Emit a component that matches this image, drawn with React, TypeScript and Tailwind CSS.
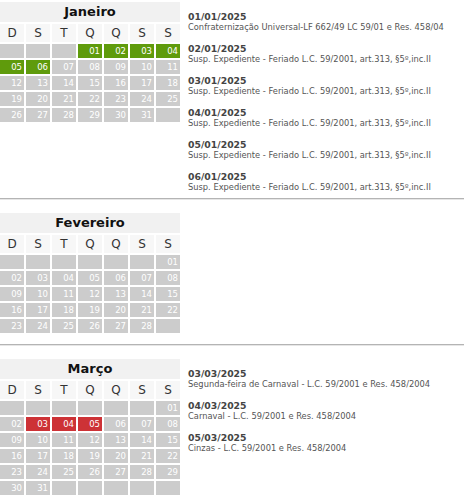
import React from "react";

interface Holiday {
  date: string;
  text: string;
}

interface Month {
  name: string;
  firstWeekday: number;
  days: number;
  marked: number[];
  markColor: string;
  holidays: Holiday[];
}

const SUSP = "Susp. Expediente - Feriado L.C. 59/2001, art.313, §5º,inc.II";

const months: Month[] = [
  {
    name: "Janeiro",
    firstWeekday: 3,
    days: 31,
    marked: [1, 2, 3, 4, 5, 6],
    markColor: "bg-[#5f9b0c]",
    holidays: [
      { date: "01/01/2025", text: "Confraternização Universal-LF 662/49 LC 59/01 e Res. 458/04" },
      { date: "02/01/2025", text: SUSP },
      { date: "03/01/2025", text: SUSP },
      { date: "04/01/2025", text: SUSP },
      { date: "05/01/2025", text: SUSP },
      { date: "06/01/2025", text: SUSP },
    ],
  },
  {
    name: "Fevereiro",
    firstWeekday: 6,
    days: 28,
    marked: [],
    markColor: "",
    holidays: [],
  },
  {
    name: "Março",
    firstWeekday: 6,
    days: 31,
    marked: [3, 4, 5],
    markColor: "bg-[#cd3236]",
    holidays: [
      { date: "03/03/2025", text: "Segunda-feira de Carnaval - L.C. 59/2001 e Res. 458/2004" },
      { date: "04/03/2025", text: "Carnaval - L.C. 59/2001 e Res. 458/2004" },
      { date: "05/03/2025", text: "Cinzas - L.C. 59/2001 e Res. 458/2004" },
    ],
  },
];

const weekdays = ["D", "S", "T", "Q", "Q", "S", "S"];

function Calendar({ month }: { month: Month }) {
  const cells: (number | null)[] = [];
  for (let i = 0; i < month.firstWeekday; i++) cells.push(null);
  for (let d = 1; d <= month.days; d++) cells.push(d);
  while (cells.length % 7 !== 0) cells.push(null);

  return (
    <div className="w-[180px] shrink-0 pt-[2px] pb-[6px]">
      <div className="grid grid-cols-7 gap-[2px]">
        {/* Title */}
        <div className="col-span-7 h-[20px] bg-[#f1f1f1] flex items-center justify-center text-[13px] font-bold text-[#111]">
          {month.name}
        </div>

        {/* Weekday header */}
        {weekdays.map((w, i) => (
          <div
            key={i}
            className="h-[18px] bg-[#f7f7f7] flex items-center justify-center text-[12px] text-[#333]"
          >
            {w}
          </div>
        ))}

        {/* Days */}
        {cells.map((d, i) => (
          <div
            key={i}
            className={
              "h-[14px] flex items-center justify-end pr-[2px] text-[8.5px] text-white " +
              (d && month.marked.includes(d) ? month.markColor : "bg-[#cccccc]")
            }
          >
            {d ? String(d).padStart(2, "0") : ""}
          </div>
        ))}
      </div>
    </div>
  );
}

export default function App() {
  return (
    <div
      className="w-[464px] bg-white"
      style={{ fontFamily: '"DejaVu Sans", Verdana, sans-serif' }}
    >
      {months.map((m, idx) => (
        <div key={m.name}>
          {idx > 0 && (
            <div className="mt-[5px] mb-[11px] border-t border-t-[#b4b4b4] border-b border-b-[#e6e6e6]" />
          )}
          <div className="flex items-start">
            <Calendar month={m} />
            <div className="pl-[8px] pt-[11px] flex flex-col gap-[10px]">
              {m.holidays.map((h) => (
                <div key={h.date}>
                  <div className="text-[9.3px] leading-[11px] font-bold text-[#444]">
                    {h.date}
                  </div>
                  <div className="text-[8.3px] leading-[11px] text-[#555] whitespace-nowrap">
                    {h.text}
                  </div>
                </div>
              ))}
            </div>
          </div>
        </div>
      ))}
    </div>
  );
}
